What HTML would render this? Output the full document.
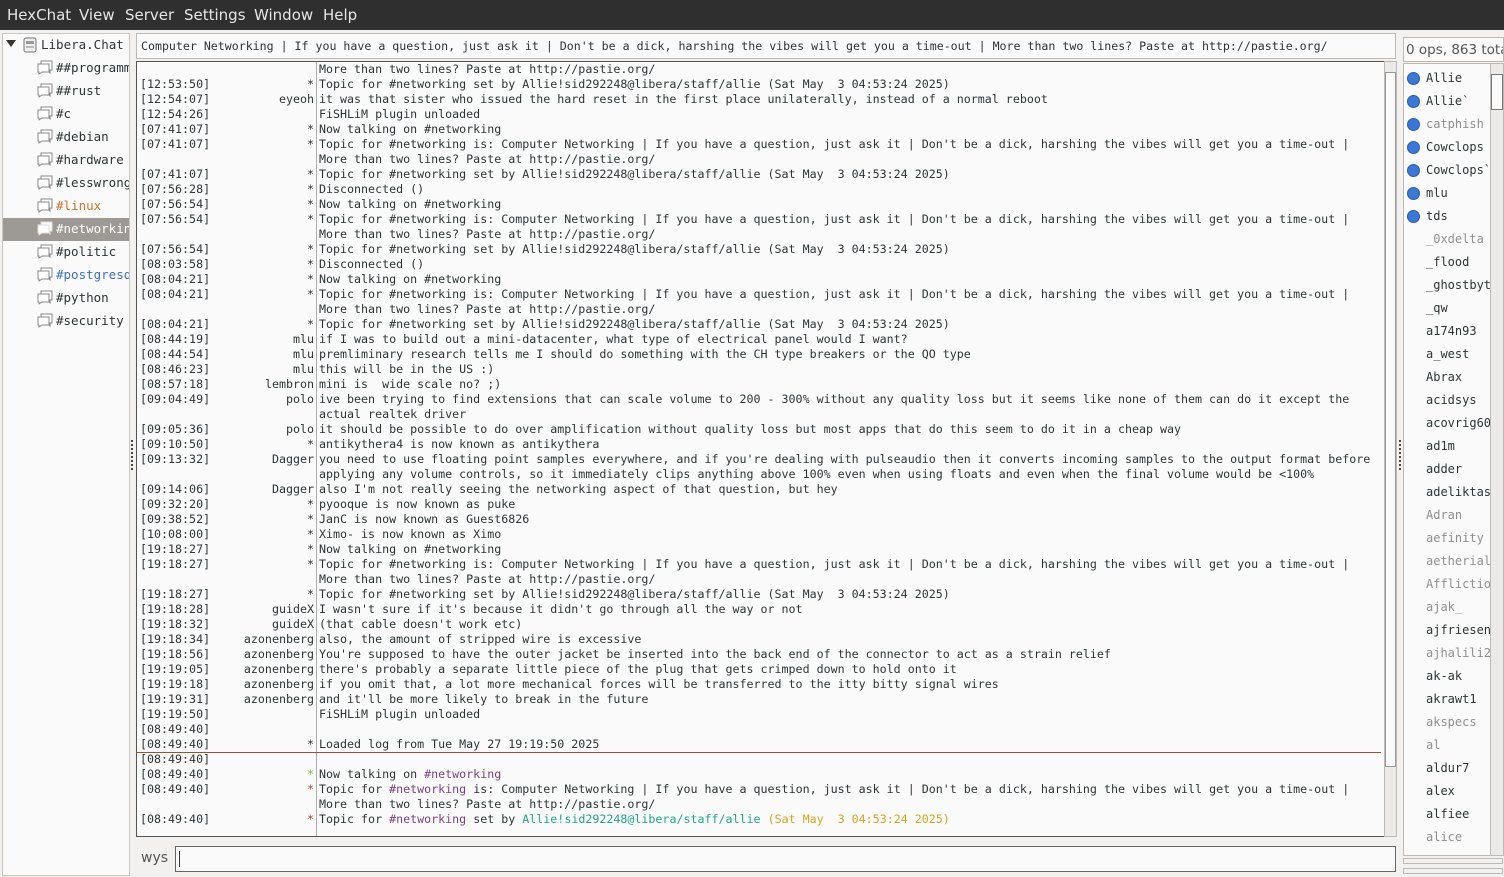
<!DOCTYPE html>
<html><head><meta charset="utf-8"><style>
*{margin:0;padding:0;box-sizing:border-box}
body{width:1504px;height:877px;background:#f2f1f0;position:relative;overflow:hidden;font-family:"DejaVu Sans","Liberation Sans",sans-serif}
.menu{position:absolute;left:0;top:0;width:1504px;height:30px;background:#2f2f2f;color:#e6e6e6;font-size:15px}
.menu span{position:absolute;top:6px}
.tree{position:absolute;left:2px;top:33px;width:128px;height:843px;background:#fafafa;border:1px solid #c8c6c3}
.ti{position:absolute;left:0;width:126px;height:23px;font-family:"DejaVu Sans Mono",monospace;font-size:12.5px;color:#2e3436;white-space:nowrap;overflow:hidden}
.ti span{position:absolute;left:53px;top:3px}
.ti svg{position:absolute;left:34px;top:3px}
.sel{background:#9d9a96;color:#fff}
.topic{position:absolute;left:136px;top:33px;width:1260px;height:26px;background:#fafafa;border:1px solid #bdbab6;font-family:"DejaVu Sans Mono",monospace;font-size:11.6px;color:#2e3436;padding:5px 0 0 4px;white-space:nowrap;overflow:hidden}
.chat{position:absolute;left:136px;top:61px;width:1248px;height:776px;background:#fafafa;border:1px solid #555;border-right:none;overflow:hidden}
.sep{position:absolute;left:179px;top:0;width:1px;height:776px;background:#b0aeab}
.row{position:absolute;left:0;height:15px;width:1248px;font-family:"DejaVu Sans Mono",monospace;font-size:11.65px;line-height:15px;color:#2e3436;white-space:pre}
.ts{position:absolute;left:3px}
.nk{position:absolute;right:1071px;text-align:right}
.ms{position:absolute;left:182px}
.sb{position:absolute;background:#eceae8;border:1px solid #bdbab6}
.users{position:absolute;left:1403px;top:63px;width:88px;height:793px;background:#fafafa;border:1px solid #bdbab6;overflow:hidden}
.u{position:absolute;left:22px;font-family:"DejaVu Sans Mono",monospace;font-size:12px;color:#2e3436;white-space:nowrap}
.g{color:#8f8f8f}
.dot{position:absolute;left:3px;width:13px;height:13px;border-radius:50%;background:#3b78d4;border:1px solid #2a5db0}
.inp{position:absolute;left:175px;top:846px;width:1221px;height:26px;background:#fafafa;border:1px solid #666}
</style></head><body>
<div class="menu"><span style="left:7px">HexChat</span><span style="left:79px">View</span><span style="left:125px">Server</span><span style="left:184px">Settings</span><span style="left:254px">Window</span><span style="left:323px">Help</span></div>

<div class="tree">
<div style="position:absolute;left:3px;top:6px;width:0;height:0;border-left:5px solid transparent;border-right:5px solid transparent;border-top:7px solid #333"></div>
<svg style="position:absolute;left:20px;top:3px" width="14" height="16" viewBox="0 0 14 16"><rect x="1" y="1" width="12" height="14" rx="2" fill="#eee" stroke="#777"/><rect x="3" y="4" width="8" height="3" fill="#999"/><rect x="3" y="9" width="8" height="2" fill="#bbb"/></svg>
<div style="position:absolute;left:38px;top:3px;font-family:'DejaVu Sans Mono',monospace;font-size:12.5px;color:#2e3436">Libera.Chat</div>
<div class="ti" style="top:23px"><svg width="17" height="15"><path d="M4 1h11v9h-2v3l-3-3H4z" fill="#fff" stroke="#888"/><path d="M1 4h11v8H5l-3 2v-2H1z" fill="#fff" stroke="#888"/></svg><span>##programming</span></div>
<div class="ti" style="top:46px"><svg width="17" height="15"><path d="M4 1h11v9h-2v3l-3-3H4z" fill="#fff" stroke="#888"/><path d="M1 4h11v8H5l-3 2v-2H1z" fill="#fff" stroke="#888"/></svg><span>##rust</span></div>
<div class="ti" style="top:69px"><svg width="17" height="15"><path d="M4 1h11v9h-2v3l-3-3H4z" fill="#fff" stroke="#888"/><path d="M1 4h11v8H5l-3 2v-2H1z" fill="#fff" stroke="#888"/></svg><span>#c</span></div>
<div class="ti" style="top:92px"><svg width="17" height="15"><path d="M4 1h11v9h-2v3l-3-3H4z" fill="#fff" stroke="#888"/><path d="M1 4h11v8H5l-3 2v-2H1z" fill="#fff" stroke="#888"/></svg><span>#debian</span></div>
<div class="ti" style="top:115px"><svg width="17" height="15"><path d="M4 1h11v9h-2v3l-3-3H4z" fill="#fff" stroke="#888"/><path d="M1 4h11v8H5l-3 2v-2H1z" fill="#fff" stroke="#888"/></svg><span>#hardware</span></div>
<div class="ti" style="top:138px"><svg width="17" height="15"><path d="M4 1h11v9h-2v3l-3-3H4z" fill="#fff" stroke="#888"/><path d="M1 4h11v8H5l-3 2v-2H1z" fill="#fff" stroke="#888"/></svg><span>#lesswrong</span></div>
<div class="ti" style="top:161px;color:#d9702a"><svg width="17" height="15"><path d="M4 1h11v9h-2v3l-3-3H4z" fill="#fff" stroke="#888"/><path d="M1 4h11v8H5l-3 2v-2H1z" fill="#fff" stroke="#888"/></svg><span>#linux</span></div>
<div class="ti sel" style="top:184px"><svg width="17" height="15"><path d="M4 1h11v9h-2v3l-3-3H4z" fill="#fff" stroke="#ddd"/><path d="M1 4h11v8H5l-3 2v-2H1z" fill="#fff" stroke="#ddd"/></svg><span>#networking</span></div>
<div class="ti" style="top:207px"><svg width="17" height="15"><path d="M4 1h11v9h-2v3l-3-3H4z" fill="#fff" stroke="#888"/><path d="M1 4h11v8H5l-3 2v-2H1z" fill="#fff" stroke="#888"/></svg><span>#politic</span></div>
<div class="ti" style="top:230px;color:#3f6fc4"><svg width="17" height="15"><path d="M4 1h11v9h-2v3l-3-3H4z" fill="#fff" stroke="#888"/><path d="M1 4h11v8H5l-3 2v-2H1z" fill="#fff" stroke="#888"/></svg><span>#postgresql</span></div>
<div class="ti" style="top:253px"><svg width="17" height="15"><path d="M4 1h11v9h-2v3l-3-3H4z" fill="#fff" stroke="#888"/><path d="M1 4h11v8H5l-3 2v-2H1z" fill="#fff" stroke="#888"/></svg><span>#python</span></div>
<div class="ti" style="top:276px"><svg width="17" height="15"><path d="M4 1h11v9h-2v3l-3-3H4z" fill="#fff" stroke="#888"/><path d="M1 4h11v8H5l-3 2v-2H1z" fill="#fff" stroke="#888"/></svg><span>#security</span></div>
</div>

<div class="topic">Computer Networking | If you have a question, just ask it | Don't be a dick, harshing the vibes will get you a time-out | More than two lines? Paste at http://pastie.org/</div>

<div class="chat"><div class="sep"></div>
<div class="row" style="top:0"><span class="ms">More than two lines? Paste at http://pastie.org/</span></div>
<div class="row" style="top:15px"><span class="ts">[12:53:50]</span><span class="nk">*</span><span class="ms">Topic for #networking set by Allie!sid292248@libera/staff/allie (Sat May  3 04:53:24 2025)</span></div>
<div class="row" style="top:30px"><span class="ts">[12:54:07]</span><span class="nk">eyeoh</span><span class="ms">it was that sister who issued the hard reset in the first place unilaterally, instead of a normal reboot</span></div>
<div class="row" style="top:45px"><span class="ts">[12:54:26]</span><span class="ms">FiSHLiM plugin unloaded</span></div>
<div class="row" style="top:60px"><span class="ts">[07:41:07]</span><span class="nk">*</span><span class="ms">Now talking on #networking</span></div>
<div class="row" style="top:75px"><span class="ts">[07:41:07]</span><span class="nk">*</span><span class="ms">Topic for #networking is: Computer Networking | If you have a question, just ask it | Don't be a dick, harshing the vibes will get you a time-out |</span></div>
<div class="row" style="top:90px"><span class="ms">More than two lines? Paste at http://pastie.org/</span></div>
<div class="row" style="top:105px"><span class="ts">[07:41:07]</span><span class="nk">*</span><span class="ms">Topic for #networking set by Allie!sid292248@libera/staff/allie (Sat May  3 04:53:24 2025)</span></div>
<div class="row" style="top:120px"><span class="ts">[07:56:28]</span><span class="nk">*</span><span class="ms">Disconnected ()</span></div>
<div class="row" style="top:135px"><span class="ts">[07:56:54]</span><span class="nk">*</span><span class="ms">Now talking on #networking</span></div>
<div class="row" style="top:150px"><span class="ts">[07:56:54]</span><span class="nk">*</span><span class="ms">Topic for #networking is: Computer Networking | If you have a question, just ask it | Don't be a dick, harshing the vibes will get you a time-out |</span></div>
<div class="row" style="top:165px"><span class="ms">More than two lines? Paste at http://pastie.org/</span></div>
<div class="row" style="top:180px"><span class="ts">[07:56:54]</span><span class="nk">*</span><span class="ms">Topic for #networking set by Allie!sid292248@libera/staff/allie (Sat May  3 04:53:24 2025)</span></div>
<div class="row" style="top:195px"><span class="ts">[08:03:58]</span><span class="nk">*</span><span class="ms">Disconnected ()</span></div>
<div class="row" style="top:210px"><span class="ts">[08:04:21]</span><span class="nk">*</span><span class="ms">Now talking on #networking</span></div>
<div class="row" style="top:225px"><span class="ts">[08:04:21]</span><span class="nk">*</span><span class="ms">Topic for #networking is: Computer Networking | If you have a question, just ask it | Don't be a dick, harshing the vibes will get you a time-out |</span></div>
<div class="row" style="top:240px"><span class="ms">More than two lines? Paste at http://pastie.org/</span></div>
<div class="row" style="top:255px"><span class="ts">[08:04:21]</span><span class="nk">*</span><span class="ms">Topic for #networking set by Allie!sid292248@libera/staff/allie (Sat May  3 04:53:24 2025)</span></div>
<div class="row" style="top:270px"><span class="ts">[08:44:19]</span><span class="nk">mlu</span><span class="ms">if I was to build out a mini-datacenter, what type of electrical panel would I want?</span></div>
<div class="row" style="top:285px"><span class="ts">[08:44:54]</span><span class="nk">mlu</span><span class="ms">premliminary research tells me I should do something with the CH type breakers or the QO type</span></div>
<div class="row" style="top:300px"><span class="ts">[08:46:23]</span><span class="nk">mlu</span><span class="ms">this will be in the US :)</span></div>
<div class="row" style="top:315px"><span class="ts">[08:57:18]</span><span class="nk">lembron</span><span class="ms">mini is  wide scale no? ;)</span></div>
<div class="row" style="top:330px"><span class="ts">[09:04:49]</span><span class="nk">polo</span><span class="ms">ive been trying to find extensions that can scale volume to 200 - 300% without any quality loss but it seems like none of them can do it except the</span></div>
<div class="row" style="top:345px"><span class="ms">actual realtek driver</span></div>
<div class="row" style="top:360px"><span class="ts">[09:05:36]</span><span class="nk">polo</span><span class="ms">it should be possible to do over amplification without quality loss but most apps that do this seem to do it in a cheap way</span></div>
<div class="row" style="top:375px"><span class="ts">[09:10:50]</span><span class="nk">*</span><span class="ms">antikythera4 is now known as antikythera</span></div>
<div class="row" style="top:390px"><span class="ts">[09:13:32]</span><span class="nk">Dagger</span><span class="ms">you need to use floating point samples everywhere, and if you're dealing with pulseaudio then it converts incoming samples to the output format before</span></div>
<div class="row" style="top:405px"><span class="ms">applying any volume controls, so it immediately clips anything above 100% even when using floats and even when the final volume would be &lt;100%</span></div>
<div class="row" style="top:420px"><span class="ts">[09:14:06]</span><span class="nk">Dagger</span><span class="ms">also I'm not really seeing the networking aspect of that question, but hey</span></div>
<div class="row" style="top:435px"><span class="ts">[09:32:20]</span><span class="nk">*</span><span class="ms">pyooque is now known as puke</span></div>
<div class="row" style="top:450px"><span class="ts">[09:38:52]</span><span class="nk">*</span><span class="ms">JanC is now known as Guest6826</span></div>
<div class="row" style="top:465px"><span class="ts">[10:08:00]</span><span class="nk">*</span><span class="ms">Ximo- is now known as Ximo</span></div>
<div class="row" style="top:480px"><span class="ts">[19:18:27]</span><span class="nk">*</span><span class="ms">Now talking on #networking</span></div>
<div class="row" style="top:495px"><span class="ts">[19:18:27]</span><span class="nk">*</span><span class="ms">Topic for #networking is: Computer Networking | If you have a question, just ask it | Don't be a dick, harshing the vibes will get you a time-out |</span></div>
<div class="row" style="top:510px"><span class="ms">More than two lines? Paste at http://pastie.org/</span></div>
<div class="row" style="top:525px"><span class="ts">[19:18:27]</span><span class="nk">*</span><span class="ms">Topic for #networking set by Allie!sid292248@libera/staff/allie (Sat May  3 04:53:24 2025)</span></div>
<div class="row" style="top:540px"><span class="ts">[19:18:28]</span><span class="nk">guideX</span><span class="ms">I wasn't sure if it's because it didn't go through all the way or not</span></div>
<div class="row" style="top:555px"><span class="ts">[19:18:32]</span><span class="nk">guideX</span><span class="ms">(that cable doesn't work etc)</span></div>
<div class="row" style="top:570px"><span class="ts">[19:18:34]</span><span class="nk">azonenberg</span><span class="ms">also, the amount of stripped wire is excessive</span></div>
<div class="row" style="top:585px"><span class="ts">[19:18:56]</span><span class="nk">azonenberg</span><span class="ms">You're supposed to have the outer jacket be inserted into the back end of the connector to act as a strain relief</span></div>
<div class="row" style="top:600px"><span class="ts">[19:19:05]</span><span class="nk">azonenberg</span><span class="ms">there's probably a separate little piece of the plug that gets crimped down to hold onto it</span></div>
<div class="row" style="top:615px"><span class="ts">[19:19:18]</span><span class="nk">azonenberg</span><span class="ms">if you omit that, a lot more mechanical forces will be transferred to the itty bitty signal wires</span></div>
<div class="row" style="top:630px"><span class="ts">[19:19:31]</span><span class="nk">azonenberg</span><span class="ms">and it'll be more likely to break in the future</span></div>
<div class="row" style="top:645px"><span class="ts">[19:19:50]</span><span class="ms">FiSHLiM plugin unloaded</span></div>
<div class="row" style="top:660px"><span class="ts">[08:49:40]</span></div>
<div class="row" style="top:675px"><span class="ts">[08:49:40]</span><span class="nk">*</span><span class="ms">Loaded log from Tue May 27 19:19:50 2025</span></div>
<div style="position:absolute;left:0;top:690px;width:1244px;height:1px;background:#a0522d"></div>
<div class="row" style="top:690px"><span class="ts">[08:49:40]</span></div>
<div class="row" style="top:705px"><span class="ts">[08:49:40]</span><span class="nk" style="color:#8ab43c">*</span><span class="ms">Now talking on <span style="color:#7d3f80">#networking</span></span></div>
<div class="row" style="top:720px"><span class="ts">[08:49:40]</span><span class="nk" style="color:#c0392b">*</span><span class="ms">Topic for <span style="color:#7d3f80">#networking</span> is: Computer Networking | If you have a question, just ask it | Don't be a dick, harshing the vibes will get you a time-out |</span></div>
<div class="row" style="top:735px"><span class="ms">More than two lines? Paste at http://pastie.org/</span></div>
<div class="row" style="top:750px"><span class="ts">[08:49:40]</span><span class="nk" style="color:#c0392b">*</span><span class="ms">Topic for <span style="color:#7d3f80">#networking</span> set by <span style="color:#1fa58c">Allie!sid292248@libera/staff/allie</span> <span style="color:#d9a21b">(Sat May  3 04:53:24 2025)</span></span></div>
</div>
<div class="sb" style="left:1384px;top:61px;width:13px;height:776px"><div style="position:absolute;left:0;top:10px;width:11px;height:695px;background:#fafafa;border:1px solid #999"></div></div>
<div style="position:absolute;left:131px;top:440px;width:2px;height:30px;border-left:2px dotted #444"></div>
<div style="position:absolute;left:1399px;top:440px;width:2px;height:30px;border-left:2px dotted #444"></div>

<div style="position:absolute;left:1403px;top:37px;width:101px;height:25px;background:#fafafa;border:1px solid #bdbab6;color:#555;font-size:13.5px;padding:4px 0 0 2px;white-space:nowrap;overflow:hidden">0 ops, 863 total</div>
<div class="users">
<div class="dot" style="top:8px"></div><div class="u" style="top:7px">Allie</div>
<div class="dot" style="top:31px"></div><div class="u" style="top:30px">Allie`</div>
<div class="dot" style="top:54px"></div><div class="u g" style="top:53px">catphish</div>
<div class="dot" style="top:77px"></div><div class="u" style="top:76px">Cowclops</div>
<div class="dot" style="top:100px"></div><div class="u" style="top:99px">Cowclops`</div>
<div class="dot" style="top:123px"></div><div class="u" style="top:122px">mlu</div>
<div class="dot" style="top:146px"></div><div class="u" style="top:145px">tds</div>
<div class="u g" style="top:168px">_0xdelta</div>
<div class="u" style="top:191px">_flood</div>
<div class="u" style="top:214px">_ghostbyte</div>
<div class="u" style="top:237px">_qw</div>
<div class="u" style="top:260px">a174n93</div>
<div class="u" style="top:283px">a_west</div>
<div class="u" style="top:306px">Abrax</div>
<div class="u" style="top:329px">acidsys</div>
<div class="u" style="top:352px">acovrig60</div>
<div class="u" style="top:375px">ad1m</div>
<div class="u" style="top:398px">adder</div>
<div class="u" style="top:421px">adeliktas</div>
<div class="u g" style="top:444px">Adran</div>
<div class="u g" style="top:467px">aefinity</div>
<div class="u g" style="top:490px">aetherial</div>
<div class="u g" style="top:513px">Afflictio</div>
<div class="u g" style="top:536px">ajak_</div>
<div class="u" style="top:559px">ajfriesen</div>
<div class="u g" style="top:582px">ajhalili2</div>
<div class="u" style="top:605px">ak-ak</div>
<div class="u" style="top:628px">akrawt1</div>
<div class="u g" style="top:651px">akspecs</div>
<div class="u g" style="top:674px">al</div>
<div class="u" style="top:697px">aldur7</div>
<div class="u" style="top:720px">alex</div>
<div class="u" style="top:743px">alfiee</div>
<div class="u g" style="top:766px">alice</div>
</div>
<div class="sb" style="left:1490px;top:63px;width:14px;height:793px"><div style="position:absolute;left:0;top:10px;width:12px;height:36px;background:#fafafa;border:1px solid #777"></div></div>
<div style="position:absolute;left:1403px;top:858px;width:100px;height:6px;border:1px solid #bdbab6"></div>
<div style="position:absolute;left:1403px;top:868px;width:100px;height:6px;border:1px solid #bdbab6"></div>

<div style="position:absolute;left:141px;top:850px;font-size:14px;color:#555">wys</div>
<div class="inp"><div style="position:absolute;left:3px;top:4px;width:1px;height:16px;background:#333"></div></div>
</body></html>
